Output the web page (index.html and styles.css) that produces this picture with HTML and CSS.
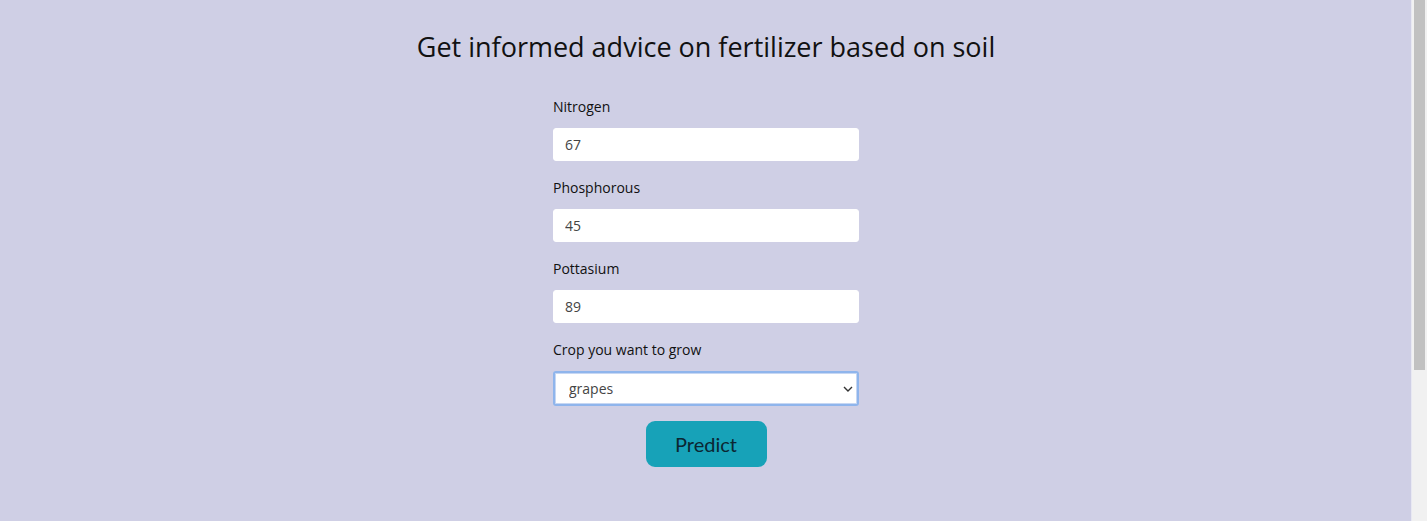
FILE: index.html
```html
<!DOCTYPE html>
<html lang="en">
<head>
<title>Fertilizer Advice</title>
<meta charset="utf-8">
<link rel="stylesheet" href="styles.css">
</head>
<body>
<div class="page">
<h1 class="title">Get informed advice on fertilizer based on soil</h1>
<form class="soil-form">
<div class="field">
<label for="nitrogen">Nitrogen</label>
<input type="number" id="nitrogen" name="nitrogen" value="67">
</div>
<div class="field">
<label for="phosphorous">Phosphorous</label>
<input type="number" id="phosphorous" name="phosphorous" value="45">
</div>
<div class="field">
<label for="pottasium">Pottasium</label>
<input type="number" id="pottasium" name="pottasium" value="89">
</div>
<div class="field">
<label for="cropname">Crop you want to grow</label>
<div class="select-wrap">
<select id="cropname" name="cropname" class="focused">
<option>grapes</option>
</select>
<svg class="chevron" width="10" height="6" viewBox="0 0 10 6"><path d="M1 1l4 4 4-4" fill="none" stroke="#333" stroke-width="1.4"/></svg>
</div>
</div>
<button type="button" class="predict">Predict</button>
</form>
</div>
<div class="scrollbar"><div class="thumb"></div></div>
</body>
</html>
```

FILE: styles.css
```css
html, body {
margin: 0;
background-color: #cfcfe5;
}
body {
font-family: Lato, "Open Sans", sans-serif;
color: #111;
}
.page {
width: 1412px; /* viewport minus scrollbar */
display: flex;
flex-flow: column nowrap;
align-items: center;
}
.title {
font-family: "Open Sans", sans-serif;
font-weight: 400;
font-size: 27px;
margin: 28px 0 32px;
}
.soil-form {
width: 306px;
display: flex;
flex-flow: column nowrap;
}
.field {
display: flex;
flex-flow: column nowrap;
margin-bottom: 17px;
}
.field:last-of-type {
margin-bottom: 15px;
}
label {
font-family: "Open Sans", sans-serif;
font-size: 14px;
line-height: 20px;
margin-bottom: 11px;
}
input, select {
box-sizing: border-box;
height: 33px;
width: 100%;
border: 1px solid #fff;
border-radius: 3px;
background: #fff;
padding: 0 11px;
font-family: "Open Sans", sans-serif;
font-size: 14px;
color: #444;
}
input::-webkit-inner-spin-button {
-webkit-appearance: none;
}
.select-wrap {
position: relative;
}
select {
-webkit-appearance: none;
appearance: none;
padding-left: 14px;
}
select.focused {
height: 35px;
border: 2px solid #8fb5ec;
box-shadow: inset 0 0 0 1px #c6d7f3;
}
.chevron {
position: absolute;
right: 6px;
top: 15px;
}
.predict {
align-self: center;
width: 121px;
height: 46px;
border: none;
border-radius: 9px;
background-color: #17a2b8;
color: #0b2733;
font-family: Lato, sans-serif;
font-size: 20px;
}
.scrollbar { /* fake window scrollbar */
position: fixed;
top: 0;
right: 0;
width: 15px;
height: 100%;
background: #f1f1f1;
border-left: 1px solid #e8e8f2;
}
.thumb {
margin: 0 2px;
height: 370px;
background: #c1c1c1;
}
```
